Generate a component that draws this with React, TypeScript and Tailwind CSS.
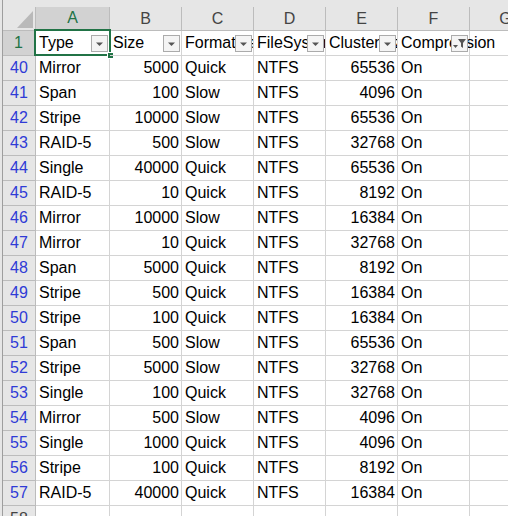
import React from "react";

const rows: [number, string, string, string, string, string, string][] = [
  [40, "Mirror", "5000", "Quick", "NTFS", "65536", "On"],
  [41, "Span", "100", "Slow", "NTFS", "4096", "On"],
  [42, "Stripe", "10000", "Slow", "NTFS", "65536", "On"],
  [43, "RAID-5", "500", "Slow", "NTFS", "32768", "On"],
  [44, "Single", "40000", "Quick", "NTFS", "65536", "On"],
  [45, "RAID-5", "10", "Quick", "NTFS", "8192", "On"],
  [46, "Mirror", "10000", "Slow", "NTFS", "16384", "On"],
  [47, "Mirror", "10", "Quick", "NTFS", "32768", "On"],
  [48, "Span", "5000", "Quick", "NTFS", "8192", "On"],
  [49, "Stripe", "500", "Quick", "NTFS", "16384", "On"],
  [50, "Stripe", "100", "Quick", "NTFS", "16384", "On"],
  [51, "Span", "500", "Slow", "NTFS", "65536", "On"],
  [52, "Stripe", "5000", "Slow", "NTFS", "32768", "On"],
  [53, "Single", "100", "Quick", "NTFS", "32768", "On"],
  [54, "Mirror", "500", "Slow", "NTFS", "4096", "On"],
  [55, "Single", "1000", "Quick", "NTFS", "4096", "On"],
  [56, "Stripe", "100", "Quick", "NTFS", "8192", "On"],
  [57, "RAID-5", "40000", "Quick", "NTFS", "16384", "On"],
];

const colW = ["w-[74px]", "w-[72px]", "w-[72px]", "w-[72px]", "w-[72px]", "w-[72px]", "w-[72px]"];

function FilterButton({ active }: { active?: boolean }) {
  return (
    <div className="absolute right-[1px] top-[4px] w-[17px] h-[17px] border border-[#ababab] bg-[#f4f4f4] flex items-center justify-center">
      {active ? (
        <svg width="15" height="13" viewBox="0 0 15 13">
          <path d="M1 8h5l-2.5 3z" fill="#555" />
          <path d="M6 2h8l-3 4v5l-2-1.5V6z" fill="#555" />
        </svg>
      ) : (
        <svg width="9" height="6" viewBox="0 0 9 6">
          <path d="M1 1.5h7l-3.5 3.5z" fill="#555" />
        </svg>
      )}
    </div>
  );
}

export default function App() {
  const headers = ["Type", "Size", "FormatMethod", "FileSystem", "ClusterSize", "Compression", ""];

  return (
    <div
      className="w-[508px] h-[516px] overflow-hidden bg-white text-[16px] text-black"
      style={{ fontFamily: '"Liberation Sans", "Noto Sans CJK JP", sans-serif' }}
    >
      <div className="flex h-full">
        <div className="w-[3px] shrink-0 flex">
          <div className="w-[2px] bg-[#e6e6e6]" />
          <div className="w-[1px] bg-[#9e9e9e]" />
        </div>
        <div className="flex flex-col">
          {/* top strip */}
          <div className="h-[7px] shrink-0 bg-[#e6e6e6] w-[600px]" />
          {/* column headers */}
          <div className="flex h-[24px] shrink-0">
            <div className="w-[33px] shrink-0 bg-[#e6e6e6] border-r border-b border-[#bcbcbc] flex items-end justify-end pr-[2px] pb-[2px]">
              <svg width="16" height="17" viewBox="0 0 16 17">
                <path d="M16 0V17H0z" fill="#b9b9b9" />
              </svg>
            </div>
            {["A", "B", "C", "D", "E", "F", "G"].map((c, i) => (
              <div
                key={c}
                className={`${colW[i]} shrink-0 border-r flex items-center justify-center ${
                  i === 0
                    ? "bg-[#d2d2d2] text-[#217346] border-b-2 border-b-[#217346] border-r-[#bcbcbc]"
                    : "bg-[#e6e6e6] text-[#444] border-b border-[#bcbcbc]"
                }`}
              >
                {c}
              </div>
            ))}
          </div>
          {/* row 1 */}
          <div className="flex h-[25px] shrink-0">
            <div className="w-[33px] shrink-0 bg-[#d2d2d2] text-[#217346] border-r-2 border-r-[#217346] border-b border-b-[#bcbcbc] flex items-center justify-center">
              1
            </div>
            {headers.map((h, i) => (
              <div
                key={i}
                className={`${colW[i]} shrink-0 border-r border-b border-[#d4d4d4] flex items-center pl-[3px] whitespace-nowrap ${
                  i === 5 ? "relative" : i < 5 ? "relative overflow-hidden" : ""
                } ${i === 0 ? "overflow-visible" : ""}`}
              >
                <span className={i < 5 ? "overflow-hidden" : ""}>{h}</span>
                {i < 6 && <FilterButton active={i === 5} />}
                {i === 0 && (
                  <div className="absolute left-[-2px] top-[-2px] right-[-2px] bottom-[-1px] border-2 border-[#217346] pointer-events-none">
                    <div className="absolute right-[-5px] bottom-[-5px] w-[7px] h-[7px] bg-[#217346] border border-white" />
                  </div>
                )}
              </div>
            ))}
          </div>
          {rows.map((r) => (
            <div key={r[0]} className="flex h-[25px] shrink-0">
              <div className="w-[33px] shrink-0 bg-[#e6e6e6] text-[#2f3bd6] border-r border-b border-[#bcbcbc] flex items-center justify-center">
                {r[0]}
              </div>
              {r.slice(1).map((v, i) => (
                <div
                  key={i}
                  className={`${colW[i]} shrink-0 border-r border-b border-[#d4d4d4] flex items-center whitespace-nowrap ${
                    i === 1 || i === 4 ? "justify-end pr-[2px]" : "pl-[3px]"
                  }`}
                >
                  {v}
                </div>
              ))}
              <div className={`${colW[6]} shrink-0 border-r border-b border-[#d4d4d4]`} />
            </div>
          ))}
          <div className="flex h-[25px] shrink-0">
            <div className="w-[33px] shrink-0 bg-[#e6e6e6] text-[#444] border-r border-[#bcbcbc] flex items-center justify-center">
              58
            </div>
            {colW.map((w, i) => (
              <div key={i} className={`${w} shrink-0 border-r border-[#d4d4d4]`} />
            ))}
          </div>
        </div>
      </div>
    </div>
  );
}
